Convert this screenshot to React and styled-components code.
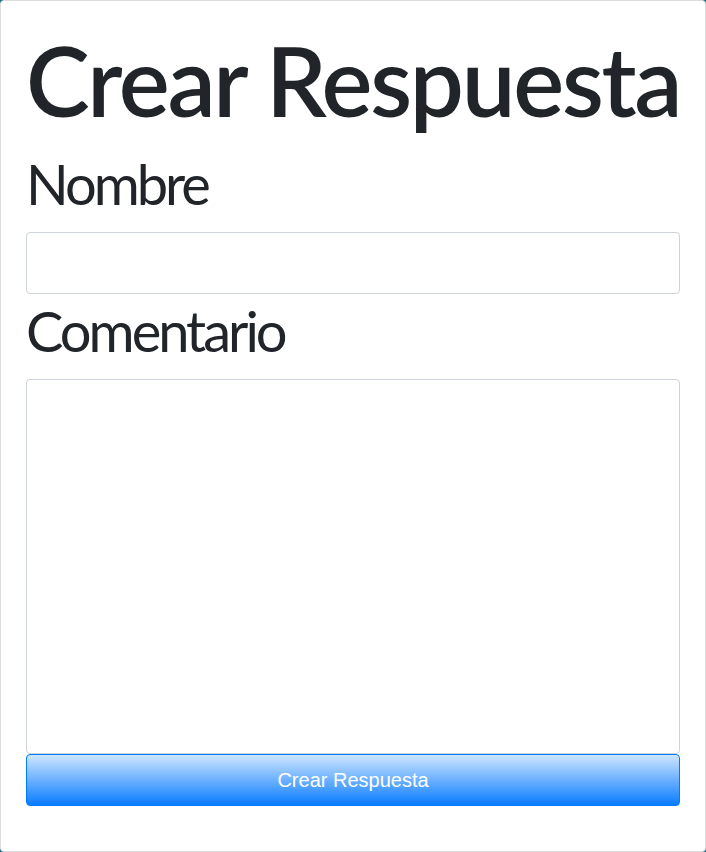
import styled, { createGlobalStyle } from 'styled-components';

const GlobalStyle = createGlobalStyle`
  html, body {
    margin: 0;
    padding: 0;
    background: #1f6a80;
  }
  * {
    box-sizing: border-box;
  }
`;

export default function App() {
  return (
    <>
      <GlobalStyle />
      <Card>
        <Title>Crear Respuesta</Title>
        <Label htmlFor="nombre">Nombre</Label>
        <Input id="nombre" type="text" />
        <Label htmlFor="comentario" $gapTop={3}>Comentario</Label>
        <TextArea id="comentario" />
        <SubmitButton type="submit">Crear Respuesta</SubmitButton>
      </Card>
    </>
  );
}

const Card = styled.form`
  display: flex;
  flex-direction: column;
  height: 852px;
  padding: 21px 25px 0;
  background: #fff;
  border: 1px solid #dcdcdc;
  border-radius: 4px;
  color: #212529;
  font-family: Lato, "Open Sans", sans-serif;
`;

const Title = styled.h1`
  margin: 0 0 13px;
  font-size: 96px;
  font-weight: 600;
  line-height: 115px;
  letter-spacing: -2.3px;
  white-space: nowrap;
`;

const Label = styled.label`
  display: block;
  margin: ${({ $gapTop }) => $gapTop || 0}px 0 15px;
  font-size: 56px;
  font-weight: 400;
  line-height: 67px;
  letter-spacing: -3px;
`;

const Input = styled.input`
  display: block;
  width: 100%;
  height: 62px;
  padding: 6px 12px;
  border: 1px solid #ced4da;
  border-radius: 4px;
  background: #fff;
  font-size: 16px;
`;

const TextArea = styled.textarea`
  display: block;
  width: 100%;
  height: 375px;
  padding: 6px 12px;
  border: 1px solid #ced4da;
  border-radius: 4px;
  background: #fff;
  resize: none;
  font-size: 16px;
`;

const SubmitButton = styled.button`
  display: block;
  width: 100%;
  height: 52px;
  border: 1px solid #007bff;
  border-radius: 4px;
  background: linear-gradient(#cde5ff, #0a7cff);
  color: #fff;
  font-family: "Liberation Sans", Arial, sans-serif;
  font-size: 20px;
  cursor: pointer;
`;
